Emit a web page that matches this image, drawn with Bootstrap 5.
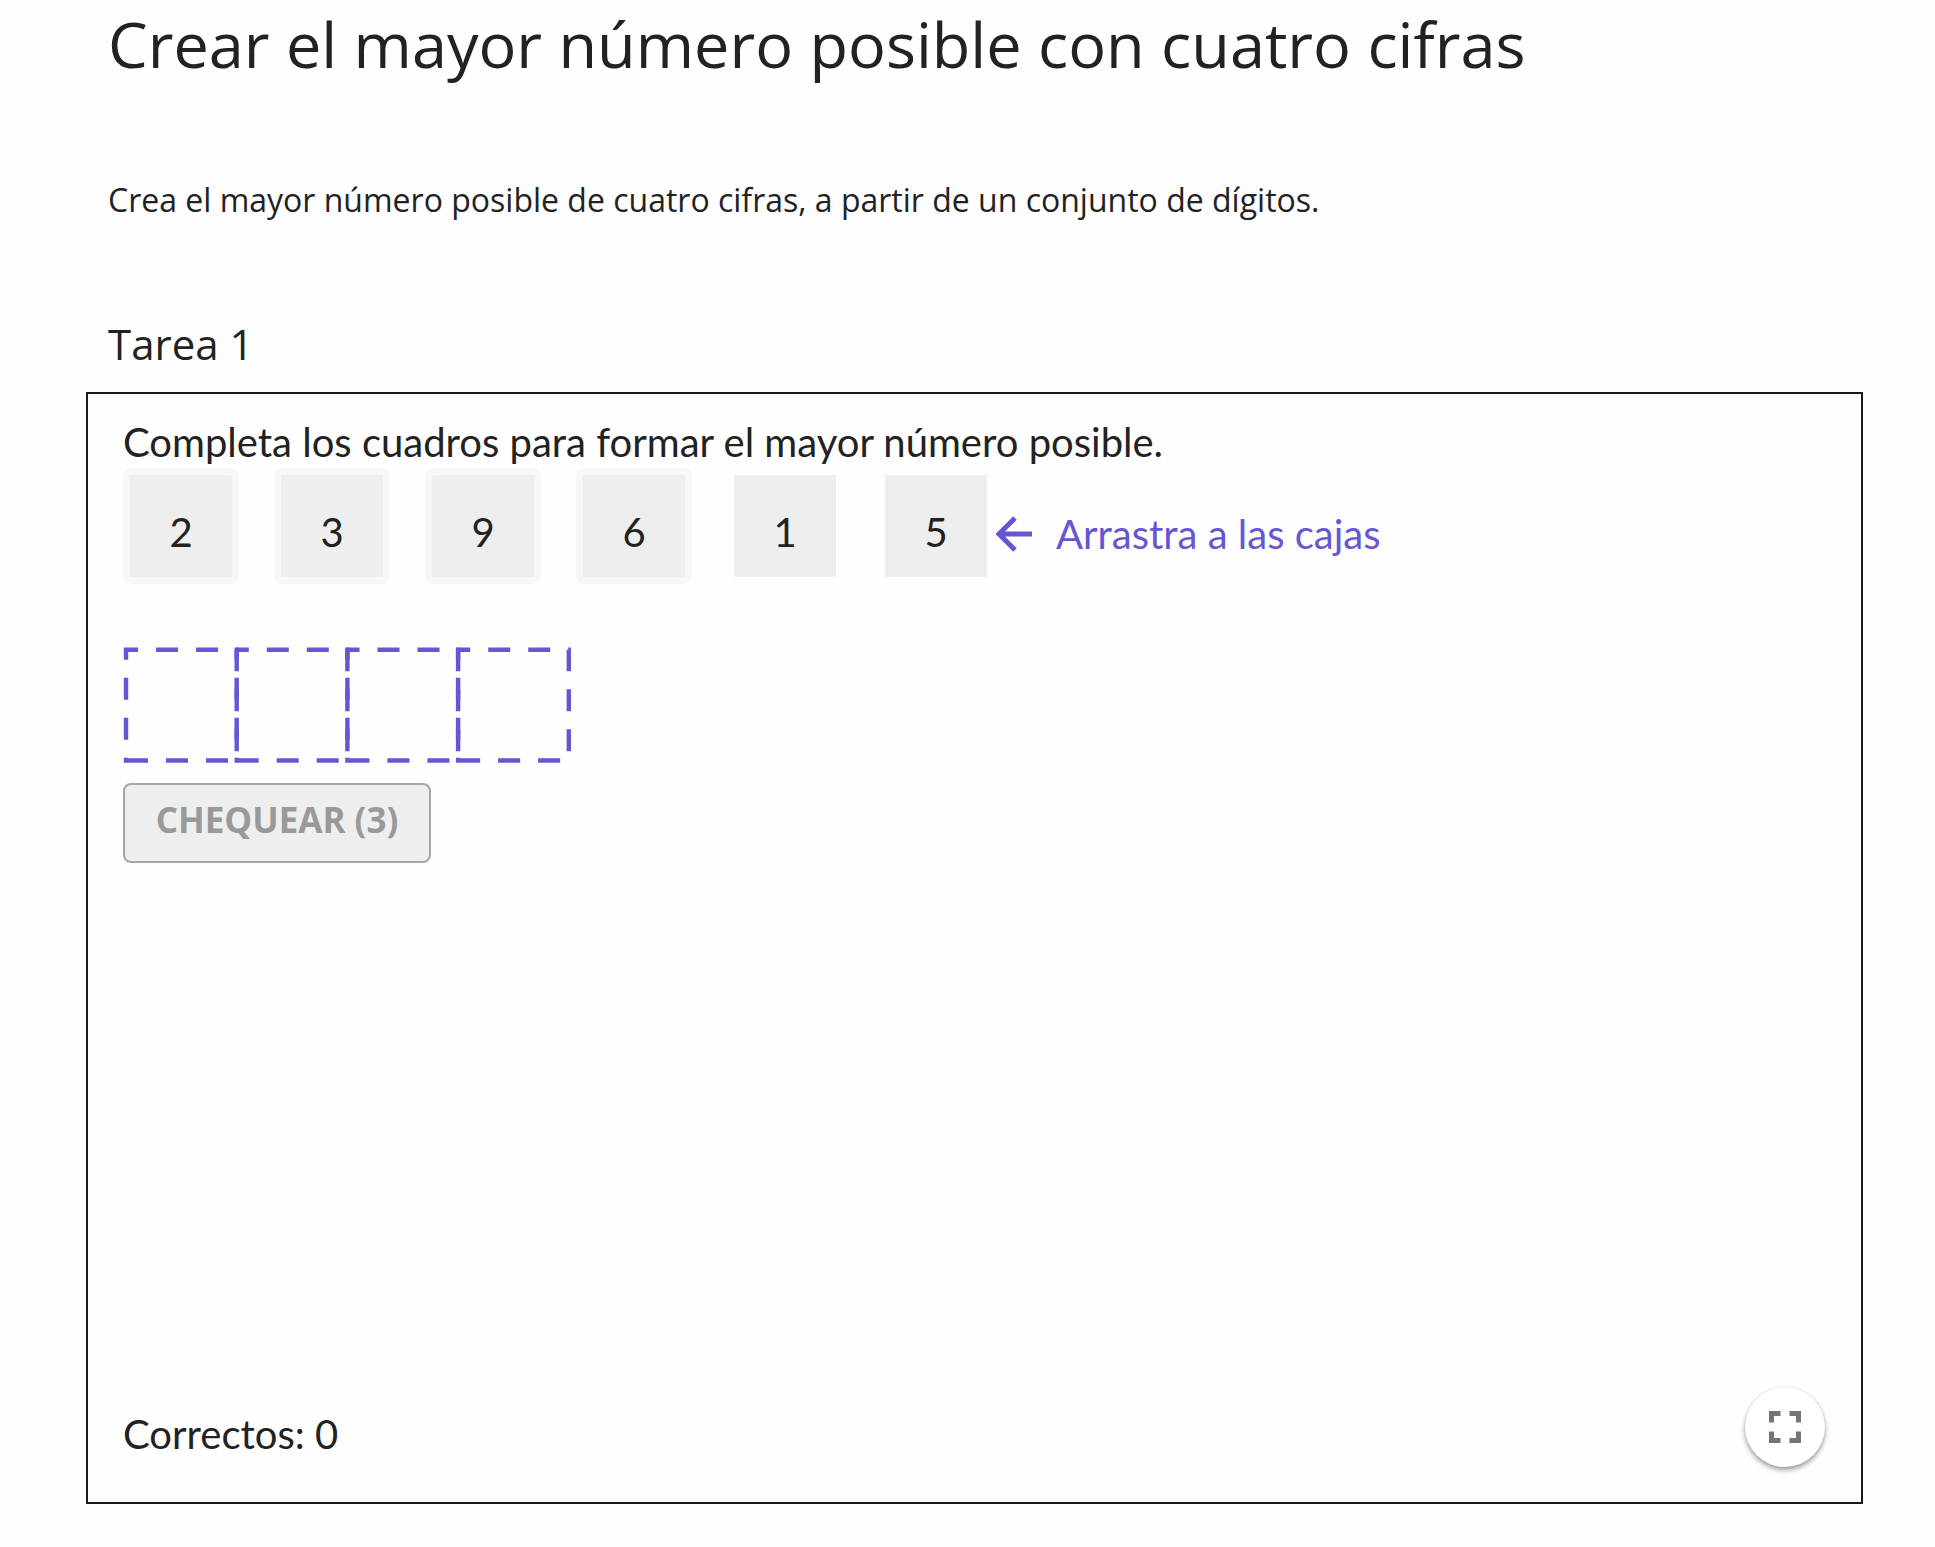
<!DOCTYPE html>
<html lang="es">
<head>
<meta charset="utf-8">
<meta name="viewport" content="width=device-width, initial-scale=1">
<title>Crear el mayor número posible con cuatro cifras</title>
<link href="https://cdn.jsdelivr.net/npm/bootstrap@5.3.0/dist/css/bootstrap.min.css" rel="stylesheet">
<style>
  body { font-family: "Open Sans", "Noto Sans", sans-serif; color: #222; background: #fefefe; }
  .sheet { padding: 0 72px 40px 86px; }
  .sheet-head { padding-left: 22px; }
  .sheet-title { font-size: 63px; line-height: 88px; }
  .sheet-intro { font-size: 32px; line-height: 44px; margin-top: 90px; }
  .task-title { font-size: 42px; line-height: 60px; margin-top: 92px; margin-bottom: 18px; }
  .applet { aspect-ratio: 1777 / 1112; border: 2px solid #1a1a1a; padding: 22px 36px 35px 35px; font-family: Lato, sans-serif; font-size: 40px; line-height: 52px; background: #fefefe; }
  .tiles { gap: 35px; }
  .tile { width: 116px; height: 116px; padding: 12px 0 0; border: 7px solid transparent; border-radius: 8px; background: #eee; background-clip: padding-box; color: #222; line-height: 52px; }
  .tile-halo { border-color: #f7f7f7; }
  .hint { color: #6557d2; gap: 24px; margin-left: 2px; padding-top: 16px; }
  .slots { margin-top: 63px; }
  .btn-check-answer { width: 308px; height: 80px; margin-top: 20px; padding: 0 0 6px; border: 2px solid #a6a6a6; border-radius: 8px; background: #eee; color: #999; font-family: "Open Sans", sans-serif; font-size: 35px; font-weight: 700; line-height: 40px; }
  .score { padding-top: 14px; }
  .btn-full { width: 80px; height: 80px; border: 0; background: #fff; box-shadow: 0 3px 5px rgba(0,0,0,.38), 0 0 2px rgba(0,0,0,.12); }
</style>
<script src="https://cdn.jsdelivr.net/npm/bootstrap@5.3.0/dist/js/bootstrap.bundle.min.js"></script>
</head>
<body>
<main class="container-fluid sheet">
  <header class="sheet-head">
    <h1 class="sheet-title fw-normal mb-0">Crear el mayor número posible con cuatro cifras</h1>
    <p class="sheet-intro mb-0">Crea el mayor número posible de cuatro cifras, a partir de un conjunto de dígitos.</p>
    <h2 class="task-title fw-normal">Tarea 1</h2>
  </header>
  <section class="applet d-flex flex-column align-items-start">
    <p class="mb-0">Completa los cuadros para formar el mayor número posible.</p>
    <div class="d-flex flex-wrap align-items-center">
      <div class="tiles d-flex">
        <button type="button" class="tile tile-halo">2</button>
        <button type="button" class="tile tile-halo">3</button>
        <button type="button" class="tile tile-halo">9</button>
        <button type="button" class="tile tile-halo">6</button>
        <button type="button" class="tile">1</button>
        <button type="button" class="tile">5</button>
      </div>
      <div class="hint d-flex align-items-center">
        <svg width="36" height="36" viewBox="0 0 36 36" fill="none" stroke="currentColor" stroke-width="5" aria-hidden="true"><path d="M36 18H4M19 2L3 18L19 34"/></svg>
        <span>Arrastra a las cajas</span>
      </div>
    </div>
    <svg class="slots" width="448" height="116" viewBox="0 0 448 116" fill="none" stroke="#6557d2" stroke-width="4.4" stroke-dasharray="22 18" aria-hidden="true">
      <path d="M3 113.5h110.7v-110.7h-110.7z"/>
      <path d="M113.7 113.5h110.7v-110.7h-110.7z"/>
      <path d="M224.4 113.5h110.7v-110.7h-110.7z"/>
      <path d="M335.1 113.5h110.7v-110.7h-110.7z"/>
    </svg>
    <button type="button" class="btn-check-answer">CHEQUEAR (3)</button>
    <div class="d-flex justify-content-between align-items-center w-100 mt-auto">
      <span class="score">Correctos: 0</span>
      <button type="button" class="btn-full rounded-circle d-flex align-items-center justify-content-center p-0" aria-label="Pantalla completa">
        <svg width="32" height="32" viewBox="0 0 32 32" fill="none" stroke="#757575" stroke-width="5" aria-hidden="true"><path d="M2.500 11.500V2.500H11.500M20.500 2.500H29.500V11.500M29.500 20.500V29.500H20.500M11.500 29.500H2.500V20.500"/></svg>
      </button>
    </div>
  </section>
</main>
</body>
</html>
